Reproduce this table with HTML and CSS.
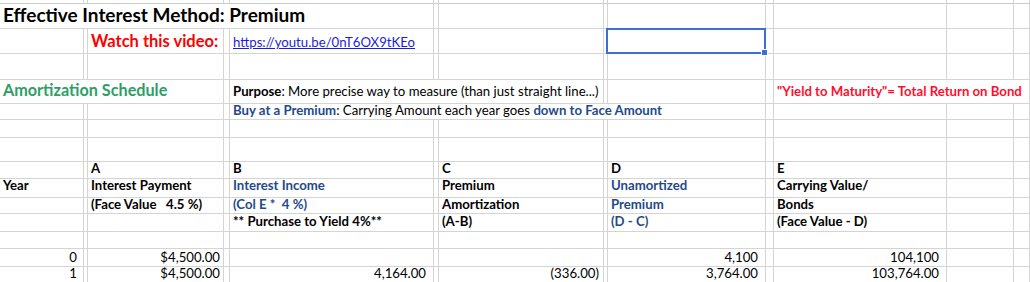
FILE: index.html
```html
<!DOCTYPE html>
<html>
<head>
<meta charset="utf-8">
<title>Effective Interest Method: Premium</title>
<link rel="stylesheet" href="styles.css">
</head>
<body>
<div class="sheet">
  <div class="row r0"><div></div><div></div><div></div><div></div><div></div><div></div><div></div><div></div><div></div><div></div><div></div><div></div><div></div></div>
  <div class="row r1"><div class="t s5 title">Effective Interest Method: Premium</div><div></div><div></div><div></div><div></div><div></div><div></div><div></div><div></div></div>
  <div class="row r2"><div></div><div></div><div class="t watch">Watch this video:</div><div></div><div class="t"><a class="link" href="#">https://youtu.be/0nT6OX9tKEo</a></div><div></div><div></div><div></div><div class="sel"></div><div></div><div></div><div></div><div></div></div>
  <div class="row r3"><div></div><div></div><div></div><div></div><div></div><div></div><div></div><div></div><div></div><div></div><div></div><div></div><div></div></div>
  <div class="row r4"><div class="t s3 green">Amortization Schedule</div><div></div><div class="t s3"><b>Purpose</b>: More precise way to measure (than just straight line...)</div><div></div><div></div><div></div><div class="t s3 yield">"Yield to Maturity"= Total Return on Bond</div></div>
  <div class="row r5"><div></div><div></div><div></div><div></div><div class="t s5"><b class="blue">Buy at a Premium</b>: Carrying Amount each year goes <b class="blue">down to Face Amount</b></div><div></div><div></div><div></div><div></div></div>
  <div class="row r6"><div></div><div></div><div></div><div></div><div></div><div></div><div></div><div></div><div></div><div></div><div></div><div></div><div></div></div>
  <div class="row r7"><div></div><div></div><div></div><div></div><div></div><div></div><div></div><div></div><div></div><div></div><div></div><div></div><div></div></div>
  <div class="row r8 bold"><div></div><div></div><div class="t">A</div><div></div><div class="t">B</div><div></div><div class="t">C</div><div></div><div class="t">D</div><div></div><div class="t">E</div><div></div><div></div></div>
  <div class="row r9 bold"><div class="t">Year</div><div></div><div class="t">Interest Payment</div><div></div><div class="t blue">Interest Income</div><div></div><div class="t">Premium</div><div></div><div class="t blue">Unamortized</div><div></div><div class="t">Carrying Value/</div><div></div><div></div></div>
  <div class="row r10 bold"><div></div><div></div><div class="t">(Face Value   4.5 %)</div><div></div><div class="t blue">(Col E *  4 %)</div><div></div><div class="t">Amortization</div><div></div><div class="t blue">Premium</div><div></div><div class="t">Bonds</div><div></div><div></div></div>
  <div class="row r11 bold"><div></div><div></div><div></div><div></div><div class="t">** Purchase to Yield 4%**</div><div></div><div class="t">(A-B)</div><div></div><div class="t blue">(D - C)</div><div></div><div class="t">(Face Value - D)</div><div></div><div></div></div>
  <div class="row r12"><div></div><div></div><div></div><div></div><div></div><div></div><div></div><div></div><div></div><div></div><div></div><div></div><div></div></div>
  <div class="row r13"><div class="n yr">0</div><div></div><div class="n cur">$4,500.00</div><div></div><div></div><div></div><div></div><div></div><div class="n">4,100</div><div></div><div class="n">104,100</div><div></div><div></div></div>
  <div class="row r14"><div class="n yr">1</div><div></div><div class="n cur">$4,500.00</div><div></div><div class="n">4,164.00</div><div></div><div class="n neg">(336.00)</div><div></div><div class="n">3,764.00</div><div></div><div class="n">103,764.00</div><div></div><div></div></div>
</div>
</body>
</html>
```
FILE: styles.css
```css
* {
  box-sizing: border-box;
}

html, body {
  margin: 0;
  padding: 0;
  background: #ffffff;
}

body {
  font-family: Lato, "Liberation Sans", sans-serif;
  font-size: 13.2px;
  color: #000000;
  overflow: hidden;
}

.sheet {
  width: 1030px;
}

.row {
  display: grid;
  grid-template-columns: 84px 4px 136px 6px 204px 5px 165px 4px 158px 8px 173px 67px 1fr;
}

.row > div {
  border-right: 1px solid #d4d4d4;
  border-bottom: 1px solid #d4d4d4;
  display: flex;
  align-items: flex-end;
  line-height: 1;
  white-space: pre;
  padding: 0;
  min-width: 0;
}

.row > .t {
  padding-left: 3px;
}

.row > .n {
  justify-content: flex-end;
  padding-right: 7px;
}

.row > .yr { padding-right: 6px; }
.row > .cur { padding-right: 3px; }
.row > .neg { padding-right: 4px; }

.s3 { grid-column: span 3; }
.s5 { grid-column: span 5; }

.r0 { height: 4px; }
.r0 > div { border-bottom-color: #cccccc; }
.r1 { height: 25px; }
.r2 { height: 25px; }
.r3 { height: 26px; }
.r4 { height: 24px; }
.r5 { height: 16px; }
.r6 { height: 18px; }
.r7 { height: 24px; }
.r8 { height: 16px; }
.r9 { height: 20px; }
.r10 { height: 16px; }
.r11 { height: 18px; }
.r12 { height: 17px; }
.r13 { height: 18px; }
.r14 { height: 17px; }

.r1 > div { padding-bottom: 4px; }
.r2 > div { padding-bottom: 4px; }
.r4 > div { padding-bottom: 5px; }
.r5 > div { padding-bottom: 2px; }
.r8 > div { padding-bottom: 3px; }
.r9 > div { padding-bottom: 5px; }
.r10 > div { padding-bottom: 2px; }
.r11 > div { padding-bottom: 3px; }
.r13 > div { padding-bottom: 2px; }
.r14 > div { padding-bottom: 3px; }

.bold { font-weight: 700; }

.title {
  font-size: 19px;
  font-weight: 700;
}

.watch {
  font-size: 16.5px;
  font-weight: 700;
  color: #fe0000;
}

.link {
  color: #1d1dd8;
  text-decoration: underline;
}

.green {
  font-size: 16.2px;
  font-weight: 700;
  color: #2e9e67;
}

.yield {
  font-weight: 700;
  color: #ff0f2f;
}

.blue {
  color: #1f4a8a;
}

.sel {
  position: relative;
}

.sel::before {
  content: "";
  position: absolute;
  left: -2px;
  top: -1px;
  right: -1px;
  bottom: -1px;
  border: 2px solid #3c6fd6;
}

.sel::after {
  content: "";
  position: absolute;
  right: -2px;
  bottom: -2px;
  width: 5px;
  height: 5px;
  background: #3c6fd6;
  outline: 1px solid #ffffff;
}
```
